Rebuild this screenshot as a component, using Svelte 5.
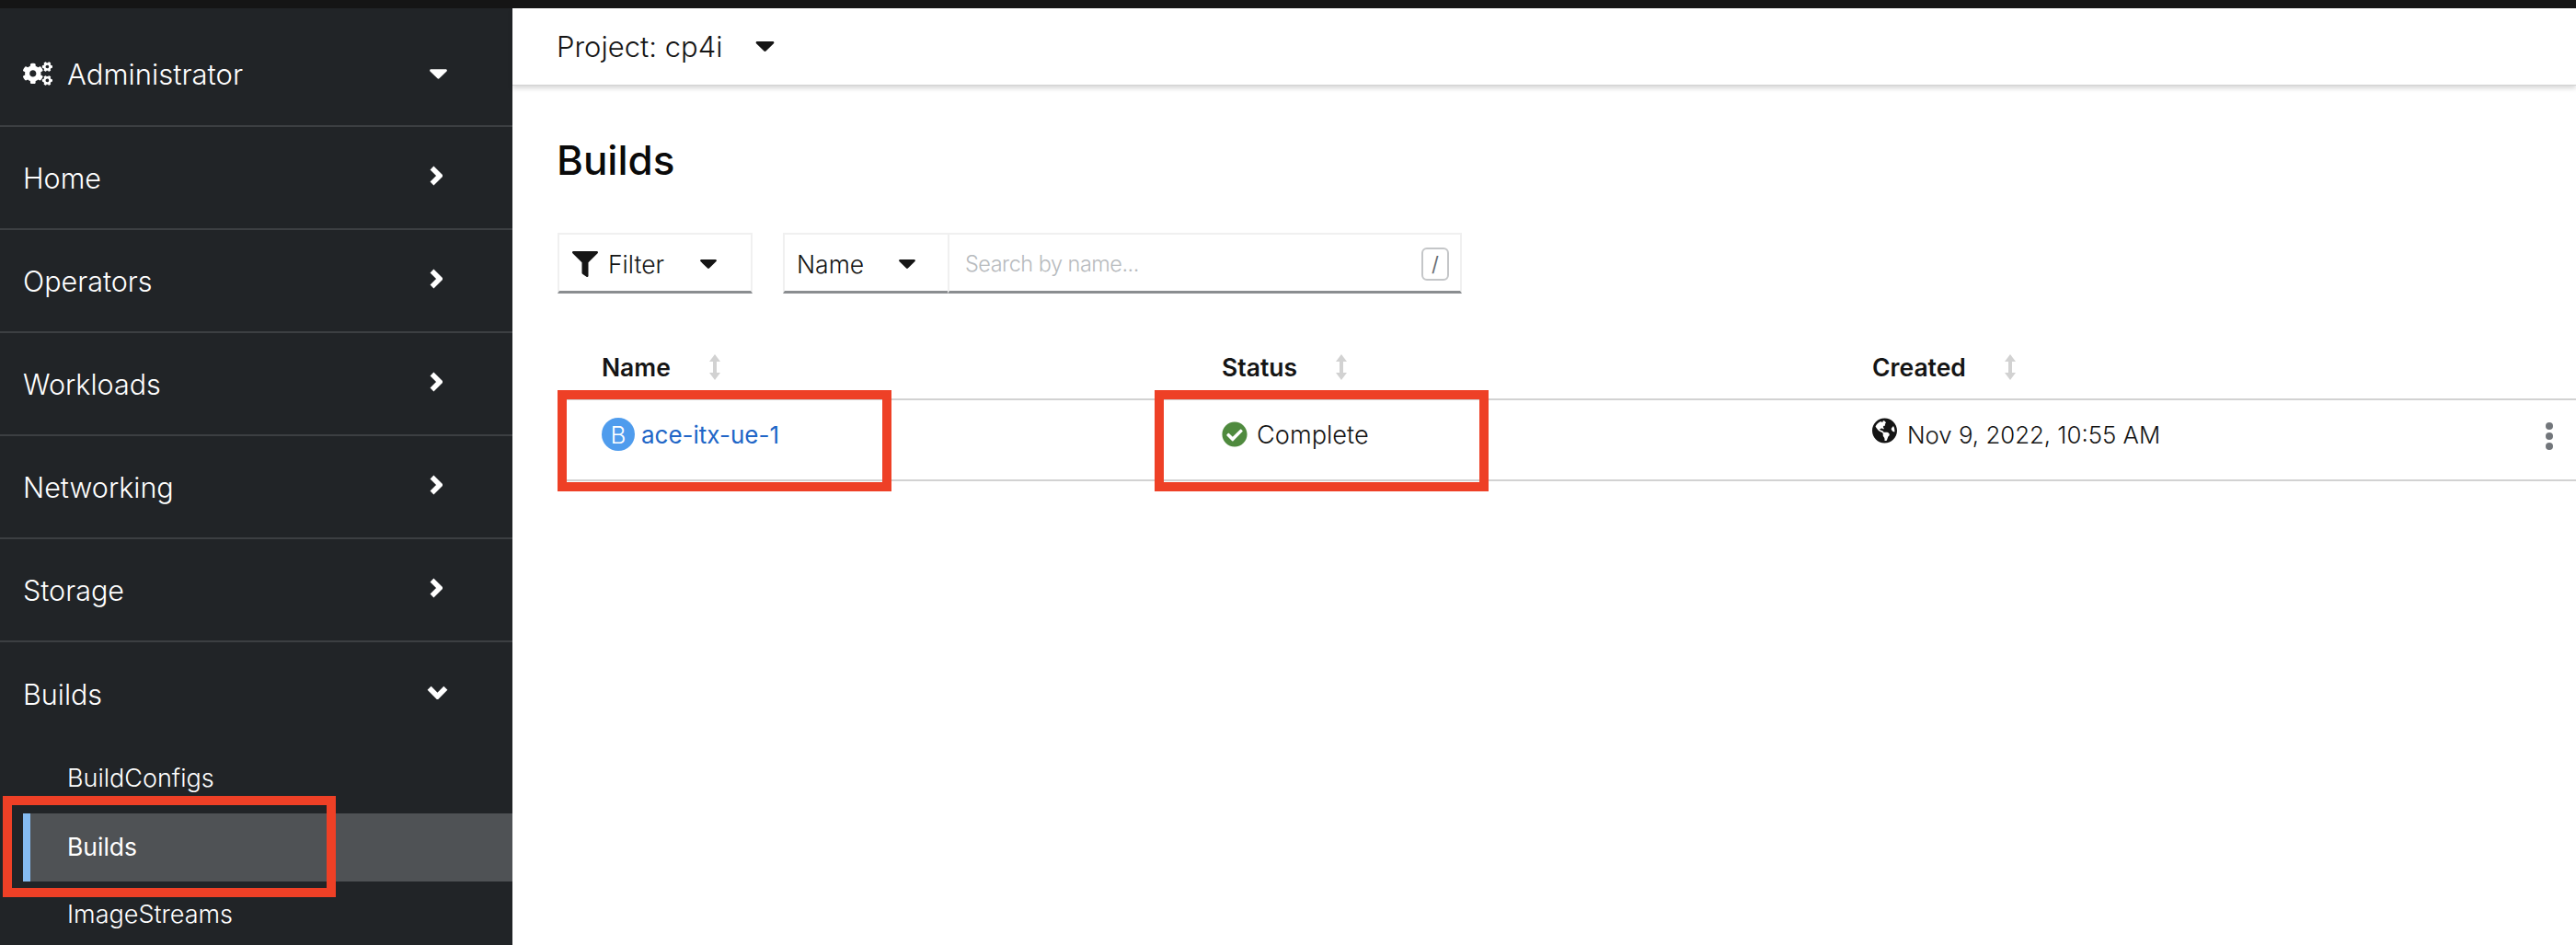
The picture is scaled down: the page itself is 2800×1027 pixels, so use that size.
<script>
    const navItems = ['Home', 'Operators', 'Workloads', 'Networking', 'Storage'];
    const subItems = [
        { label: 'BuildConfigs', active: false },
        { label: 'Builds', active: true },
        { label: 'ImageStreams', active: false }
    ];
    const columns = ['Name', 'Status', 'Created'];
</script>

{#snippet sortIcon()}
    <svg class="sort" viewBox="0 0 14 28"><path d="M7 0l6 8H9v12h4l-6 8-6-8h4V8H1z" /></svg>
{/snippet}

{#snippet caret(cls)}
    <svg class={cls} viewBox="0 0 20 11"><path d="M1.5 0h17c1.2 0 1.8 1.4 1 2.3l-8.5 8.2c-.5.6-1.500.6-2 0L.5 2.300C-.3 1.400.3 0 1.500 0z" /></svg>
{/snippet}

<div class="topbar"></div>
<div class="page">
    <nav class="sidebar">
        <div class="perspective">
            <svg class="cogs" viewBox="0 0 640 512"><path d="M512.1 191l-8.2 14.3c-3 5.3-9.4 7.5-15.1 5.4-11.8-4.4-22.6-10.7-32.1-18.6-4.6-3.8-5.8-10.5-2.8-15.7l8.2-14.3c-6.9-8-12.3-17.3-15.9-27.4h-16.5c-6 0-11.2-4.3-12.2-10.3-2-12-2.1-24.6 0-37.1 1-6 6.2-10.4 12.2-10.4h16.5c3.6-10.1 9-19.4 15.9-27.4l-8.2-14.3c-3-5.2-1.9-11.9 2.8-15.7 9.5-7.9 20.4-14.2 32.1-18.6 5.7-2.1 12.1.1 15.1 5.4l8.2 14.3c10.5-1.9 21.2-1.9 31.7 0L552 6.3c3-5.3 9.4-7.5 15.1-5.4 11.8 4.4 22.6 10.7 32.1 18.6 4.6 3.8 5.8 10.5 2.8 15.7l-8.2 14.3c6.9 8 12.3 17.3 15.9 27.4h16.5c6 0 11.2 4.3 12.2 10.3 2 12 2.1 24.6 0 37.1-1 6-6.2 10.4-12.2 10.4h-16.5c-3.6 10.1-9 19.4-15.9 27.4l8.2 14.3c3 5.2 1.9 11.9-2.8 15.7-9.5 7.9-20.4 14.2-32.1 18.6-5.7 2.1-12.1-.1-15.1-5.4l-8.2-14.3c-10.4 1.9-21.2 1.9-31.7 0zm-10.5-58.8c38.5 29.6 82.4-14.3 52.8-52.8-38.5-29.7-82.4 14.3-52.8 52.8zM386.3 286.1l33.7 16.8c10.1 5.8 14.5 18.1 10.5 29.1-8.9 24.2-26.4 46.4-42.6 65.8-7.4 8.9-20.2 11.1-30.3 5.3l-29.1-16.8c-16 13.7-34.6 24.6-54.9 31.7v33.6c0 11.6-8.3 21.6-19.7 23.6-24.6 4.2-50.4 4.4-75.9 0-11.5-2-20-11.9-20-23.6V418c-20.3-7.2-38.9-18-54.9-31.7L74 403c-10 5.8-22.9 3.6-30.3-5.3-16.2-19.4-33.3-41.6-42.2-65.7-4-10.9.4-23.2 10.500-29.100l33.3-16.800c-3.900-20.900-3.900-42.400 0-63.400L12 205.800c-10.100-5.800-14.600-18.100-10.500-29 8.900-24.200 26-46.400 42.200-65.800 7.400-8.900 20.200-11.100 30.300-5.300l29.100 16.800c16-13.700 34.600-24.600 54.900-31.700V57.100c0-11.500 8.200-21.500 19.600-23.500 24.600-4.200 50.500-4.400 76-.1 11.500 2 20 11.900 20 23.600v33.600c20.300 7.200 38.900 18 54.900 31.700l29.100-16.800c10-5.800 22.900-3.600 30.300 5.300 16.200 19.400 33.200 41.600 42.100 65.800 4 10.900.1 23.200-10 29.100l-33.700 16.800c3.900 21 3.900 42.500 0 63.500zm-117.600 21.100c59.200-77-28.700-164.900-105.700-105.700-59.200 77 28.700 164.900 105.700 105.700zm243.400 182.700l-8.200 14.300c-3 5.300-9.400 7.500-15.100 5.400-11.800-4.400-22.600-10.700-32.100-18.600-4.600-3.800-5.800-10.500-2.800-15.700l8.200-14.300c-6.900-8-12.300-17.300-15.900-27.400h-16.500c-6 0-11.200-4.300-12.200-10.300-2-12-2.100-24.600 0-37.100 1-6 6.200-10.400 12.200-10.400h16.500c3.600-10.100 9-19.400 15.900-27.400l-8.200-14.300c-3-5.200-1.900-11.900 2.800-15.700 9.500-7.900 20.400-14.200 32.100-18.600 5.700-2.100 12.100.1 15.100 5.400l8.200 14.300c10.500-1.900 21.200-1.900 31.700 0l8.200-14.300c3-5.300 9.400-7.500 15.100-5.400 11.800 4.400 22.600 10.700 32.100 18.600 4.600 3.800 5.800 10.500 2.800 15.700l-8.200 14.300c6.900 8 12.300 17.300 15.900 27.400h16.500c6 0 11.200 4.300 12.200 10.300 2 12 2.100 24.600 0 37.100-1 6-6.200 10.400-12.200 10.400h-16.500c-3.600 10.100-9 19.400-15.900 27.400l8.200 14.300c3 5.200 1.900 11.900-2.800 15.700-9.500 7.900-20.400 14.200-32.100 18.600-5.700 2.100-12.100-.1-15.100-5.400l-8.200-14.300c-10.400 1.900-21.200 1.900-31.700 0zM501.600 431c38.500 29.600 82.400-14.300 52.800-52.800-38.500-29.600-82.400 14.300-52.800 52.800z" /></svg>
            <span class="perspective-label">Administrator</span>
            {@render caret('nav-caret')}
        </div>

        {#each navItems as item}
            <div class="nav-item">
                <span>{item}</span>
                <svg class="chevron" viewBox="0 0 14 22"><polyline points="2.500,2.500 11,11 2.500,19.500" /></svg>
            </div>
        {/each}

        <div class="nav-item open">
            <span>Builds</span>
            <svg class="chevron-down" viewBox="0 0 22 14"><polyline points="2.500,2.500 11,11 19.500,2.500" /></svg>
        </div>
        <ul class="sub-list">
            {#each subItems as sub}
                <li class:active={sub.active}>{sub.label}</li>
            {/each}
        </ul>
        <div class="mark mark-nav"></div>
    </nav>

    <main class="main">
        <div class="project-bar">
            <span>Project: cp4i</span>
            {@render caret('project-caret')}
        </div>

        <h1>Builds</h1>

        <div class="toolbar">
            <div class="filter-btn">
                <svg class="funnel" viewBox="0 0 512 512"><path d="M487.976 0H24.028C2.71 0-8.047 25.866 7.058 40.971L192 225.941V432c0 7.831 3.821 15.17 10.237 19.662l80 55.98C298.02 518.69 320 507.493 320 487.98V225.941l184.947-184.97C520.021 25.896 509.338 0 487.976 0z" /></svg>
                <span>Filter</span>
                {@render caret('tool-caret')}
            </div>
            <div class="search-group">
                <div class="name-btn">
                    <span>Name</span>
                    {@render caret('tool-caret')}
                </div>
                <div class="search">
                    <span class="placeholder">Search by name...</span>
                    <kbd>/</kbd>
                </div>
            </div>
        </div>

        <div class="table">
            <div class="row head">
                {#each columns as col}
                    <div class="th"><span>{col}</span>{@render sortIcon()}</div>
                {/each}
            </div>
            <div class="row body">
                <div class="td">
                    <span class="badge">B</span>
                    <span class="link">ace-itx-ue-1</span>
                </div>
                <div class="td">
                    <svg class="status-icon" viewBox="0 0 512 512"><circle cx="256" cy="256" r="190" fill="#fff" /><path fill="#4f8a3e" d="M504 256c0 136.967-111.033 248-248 248S8 392.967 8 256 119.033 8 256 8s248 111.033 248 248zM227.314 387.314l184-184c6.248-6.248 6.248-16.379 0-22.627l-22.627-22.627c-6.248-6.249-16.379-6.249-22.628 0L216 308.118l-70.059-70.059c-6.248-6.248-16.379-6.248-22.628 0l-22.627 22.627c-6.248 6.248-6.248 16.379 0 22.627l104 104c6.249 6.25 16.379 6.25 22.628.001z" /></svg>
                    <span class="complete">Complete</span>
                </div>
                <div class="td created">
                    <svg class="globe" viewBox="0 0 496 512"><path d="M248 8C111.03 8 0 119.03 0 256s111.03 248 248 248 248-111.03 248-248S384.97 8 248 8zm82.29 357.6c-3.9 3.88-7.99 7.95-11.31 11.28-2.99 3-5.1 6.7-6.17 10.71-1.51 5.66-2.73 11.38-4.77 16.87l-17.39 46.85c-13.76 3-28 4.69-42.65 4.69v-27.38c1.69-12.62-7.64-36.26-22.63-51.25-6-6-9.37-14.14-9.37-22.63v-32.01c0-11.64-6.27-22.34-16.46-27.97-14.37-7.95-34.81-19.06-48.81-26.11-11.48-5.78-22.1-13.14-31.65-21.75l-.8-.72a114.792 114.792 0 0 1-18.06-20.74c-9.38-13.77-24.66-36.42-34.59-51.14 20.47-45.5 57.36-82.04 103.2-101.89l24.01 12.01C203.48 89.74 216 82.01 216 70.11v-11.3c7.99-1.29 16.12-2.11 24.45-2.42l28.3 28.3c6.25 6.25 6.25 16.38 0 22.63L264 112l-10.34 10.34c-3.12 3.12-3.12 8.19 0 11.31l4.69 4.69c3.12 3.12 3.12 8.19 0 11.31l-8 8a8.008 8.008 0 0 1-5.66 2.34h-8.99c-2.08 0-4.08.81-5.58 2.27l-9.92 9.65a8.008 8.008 0 0 0-1.58 9.31l15.59 31.19c2.66 5.32-1.21 11.58-7.15 11.58h-5.64c-1.93 0-3.79-.7-5.24-1.96l-9.28-8.06a16.017 16.017 0 0 0-15.55-3.1l-31.17 10.39a11.95 11.95 0 0 0-8.17 11.34c0 4.53 2.56 8.66 6.61 10.69l11.08 5.54c9.41 4.71 19.79 7.16 30.31 7.16s22.59 27.29 32 32h66.75c8.49 0 16.62 3.37 22.63 9.37l13.69 13.69a30.503 30.503 0 0 1 8.93 21.57 46.536 46.536 0 0 1-13.72 32.98zM417 274.25c-5.79-1.45-10.84-5-14.15-9.97l-17.98-26.97a23.97 23.97 0 0 1 0-26.62l19.59-29.38c2.32-3.47 5.5-6.29 9.24-8.15l12.98-6.49C440.2 193.59 448 223.87 448 256c0 8.67-.74 17.16-1.82 25.54L417 274.25z" /></svg>
                    <span class="date">Nov 9, 2022, 10:55 AM</span>
                    <div class="kebab"><i></i><i></i><i></i></div>
                </div>
            </div>
        </div>

        <div class="mark mark-name"></div>
        <div class="mark mark-status"></div>
    </main>
</div>

<style>
    :global(body) {
        margin: 0;
        background: #fff;
        font-family: Inter, 'Liberation Sans', sans-serif;
        font-weight: 300;
    }

    .topbar {
        height: 9px;
        background: #151515;
    }

    .page {
        display: flex;
        height: 1018px;
        overflow: hidden;
    }

    /* sidebar */
    .sidebar {
        position: relative;
        width: 557px;
        flex-shrink: 0;
        background: #212427;
        color: #fff;
        font-size: 30.500px;
    }

    .perspective {
        display: flex;
        align-items: center;
        height: 129px;
        box-sizing: border-box;
        padding: 15px 71px 0 25px;
        border-bottom: 2px solid #3c3f42;
    }

    .cogs {
        width: 32px;
        height: 26px;
        fill: #fff;
        margin-right: 16px;
    }

    .perspective-label {
        font-size: 31px;
        flex: 1;
    }

    .nav-item {
        display: flex;
        align-items: center;
        justify-content: space-between;
        height: 112px;
        box-sizing: border-box;
        padding: 0 76px 0 25px;
        border-bottom: 2px solid #3c3f42;
    }

    .nav-item.open {
        height: 112px;
        border-bottom: 0;
        padding: 0 70px 0 25px;
    }

    .chevron, .chevron-down {
        fill: none;
        stroke: #fff;
        stroke-width: 5.5;
    }

    .chevron {
        width: 14px;
        height: 22px;
        margin-top: -4px;
    }

    .chevron-down {
        width: 23px;
        height: 15px;
        margin-top: -4px;
    }

    :global(.nav-caret) {
        width: 19px;
        height: 11px;
        fill: #fff;
    }

    .sub-list {
        list-style: none;
        margin: 0 0 0 25px;
        padding: 0;
        font-size: 27px;
    }

    .sub-list li {
        height: 74px;
        line-height: 72px;
        padding-left: 48px;
    }

    .sub-list li.active {
        background: #4f5255;
        padding-left: 40px;
        border-left: 8px solid #85bcf2;
        font-size: 26.500px;
        font-weight: 400;
    }

    /* annotation boxes drawn over the screenshot */
    .mark {
        position: absolute;
        box-sizing: border-box;
        border: 10px solid #ee4026;
    }

    .mark-nav {
        left: 3px;
        top: 856px;
        width: 362px;
        height: 110px;
    }

    .mark-name, .mark-status {
        top: 415px;
        width: 363px;
        height: 110px;
    }

    .mark-name {
        left: 49px;
    }

    .mark-status {
        left: 698px;
    }

    /* main */
    .main {
        position: relative;
        flex: 1;
        color: #151515;
    }

    .project-bar {
        display: flex;
        align-items: center;
        height: 84px;
        box-sizing: border-box;
        padding: 0 0 0 48px;
        font-size: 31px;
        border-bottom: 1px solid #d2d2d2;
        box-shadow: 0 3px 5px rgba(3, 3, 3, 0.16);
    }

    :global(.project-caret) {
        width: 21px;
        height: 11px;
        fill: #151515;
        margin-left: 36px;
    }

    h1 {
        margin: 0;
        padding: 0 0 0 48px;
        height: 160px;
        box-sizing: border-box;
        padding-top: 50px;
        font-size: 44px;
        line-height: 62px;
        font-weight: 500;
        color: #0a0a0a;
    }

    .toolbar {
        display: flex;
        margin-left: 49px;
        gap: 33px;
        font-size: 26.500px;
        height: 66px;
    }

    .filter-btn, .name-btn, .search {
        display: flex;
        align-items: center;
        box-sizing: border-box;
        height: 66px;
        padding-top: 2px;
        border: 2px solid #f0f0f0;
        border-bottom: 3px solid #8a8d90;
    }

    .filter-btn {
        width: 212px;
        padding-left: 14px;
    }

    .funnel {
        width: 28px;
        height: 28px;
        fill: #151515;
        margin-right: 11px;
    }

    :global(.tool-caret) {
        width: 18px;
        height: 10px;
        fill: #151515;
    }

    .filter-btn :global(.tool-caret) {
        margin-left: 39px;
    }

    .search-group {
        display: flex;
    }

    .name-btn {
        width: 179px;
        padding-left: 13px;
        border-right: 0;
    }

    .name-btn :global(.tool-caret) {
        margin-left: 38px;
    }

    .search {
        width: 559px;
        padding: 2px 12px 0 17px;
        justify-content: space-between;
    }

    .placeholder {
        color: #b8bbbe;
        font-size: 23.500px;
        letter-spacing: -0.5px;
    }

    kbd {
        display: block;
        width: 30px;
        height: 36px;
        box-sizing: border-box;
        border: 2px solid #c4c6c8;
        border-radius: 6px;
        color: #6a6e73;
        font: 22px/32px Inter, sans-serif;
        text-align: center;
    }

    .table {
        margin: 64px 0 0 49px;
    }

    .row {
        display: grid;
        grid-template-columns: 674px 707px 1fr;
        padding-left: 48px;
        border-bottom: 2px solid #d2d2d2;
        box-sizing: border-box;
    }

    .head {
        height: 52px;
    }

    .body {
        height: 88px;
    }

    .th {
        display: flex;
        align-items: center;
        font-size: 26.500px;
        font-weight: 600;
        padding-bottom: 26px;
    }

    .sort {
        width: 14px;
        height: 28px;
        fill: #d2d2d2;
        margin-left: 41px;
    }

    .td {
        display: flex;
        align-items: center;
        font-size: 26px;
        padding-bottom: 12px;
    }

    .badge {
        display: flex;
        align-items: center;
        justify-content: center;
        width: 36px;
        height: 36px;
        border-radius: 50%;
        background: #4f9ced;
        color: #fff;
        font-size: 26px;
        margin-right: 7px;
    }

    .link {
        color: #2166c7;
        font-weight: 400;
    }

    .complete {
        font-size: 27.200px;
    }

    .date {
        font-size: 25.800px;
    }

    .status-icon {
        width: 28px;
        height: 28px;
        margin-right: 10px;
    }

    .created {
        position: relative;
    }

    .globe {
        width: 27px;
        height: 28px;
        fill: #151515;
        margin-right: 11px;
        margin-top: -8px;
    }

    .kebab {
        position: absolute;
        right: 25px;
        top: 24px;
        display: flex;
        flex-direction: column;
        gap: 3px;
    }

    .kebab i {
        display: block;
        width: 8px;
        height: 8px;
        border-radius: 50%;
        background: #72767b;
    }
</style>
